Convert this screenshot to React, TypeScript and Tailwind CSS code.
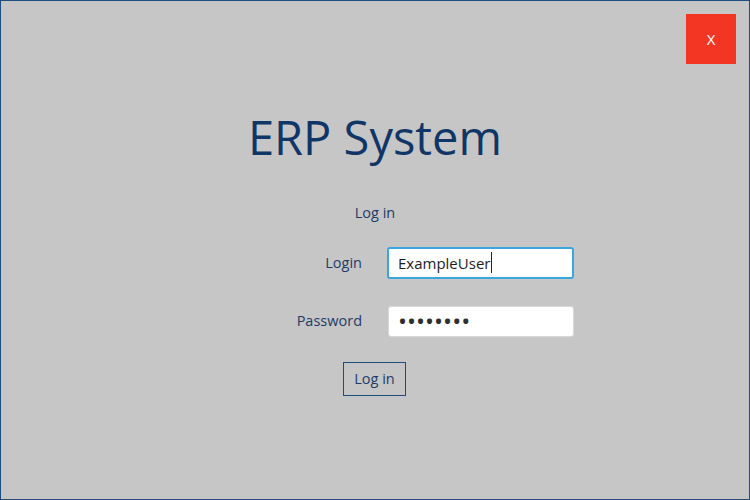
import React from "react";

const font = { fontFamily: '"Open Sans", "Noto Sans", sans-serif' };

/** Red close button in the top right corner */
const CloseButton = () => (
  <button
    type="button"
    className="absolute top-[13px] right-[13px] w-[50px] h-[50px] bg-[#f33624] text-white text-[15px] flex items-center justify-center"
  >
    X
  </button>
);

/** A text field that looks like the JavaFX one */
const Field = ({
  children,
  focused,
}: {
  children: React.ReactNode;
  focused?: boolean;
}) => (
  <div
    className={
      focused
        ? "w-[187px] h-[32px] bg-white rounded-[3px] border-2 border-[#3aa6de] flex items-center px-[9px] text-[15px] text-[#1c1c1c]"
        : "w-[186px] h-[31px] ml-[1px] bg-white rounded-[3px] border border-[#d8d8d8] flex items-center px-[9px] text-[15px] text-[#333]"
    }
  >
    {children}
  </div>
);

const Row = ({ label, children }: { label: string; children: React.ReactNode }) => (
  <div className="flex items-center">
    <div className="w-[361px] text-right text-[14.5px] text-[#1e3b68]">{label}</div>
    <div className="ml-[25px]">{children}</div>
  </div>
);

export default function App() {
  return (
    <div
      style={font}
      className="relative w-[750px] h-[500px] bg-[#c6c6c6] border border-[#1e4c7c] flex flex-col"
    >
      <CloseButton />

      <h1 className="mt-[104px] text-center text-[47px] leading-[64px] text-[#0f3667]">
        ERP System
      </h1>

      <div className="mt-[33px] text-center text-[14.5px] text-[#1e3b68]">Log in</div>

      <div className="mt-[23px] flex flex-col gap-[27px]">
        <Row label="Login">
          <Field focused>
            <span>ExampleUser</span>
            <span className="w-[1px] h-[21px] bg-[#222] ml-[1px]" />
          </Field>
        </Row>
        <Row label="Password">
          <Field>
            <span className="text-[24px] leading-none text-[#2e2e2e]">••••••••</span>
          </Field>
        </Row>
      </div>

      <div className="mt-[25px] flex justify-center pr-[1px]">
        <button
          type="button"
          className="w-[63px] h-[34px] border border-[#1e4c7c] text-[14.5px] text-[#1e3b68]"
        >
          Log in
        </button>
      </div>
    </div>
  );
}
